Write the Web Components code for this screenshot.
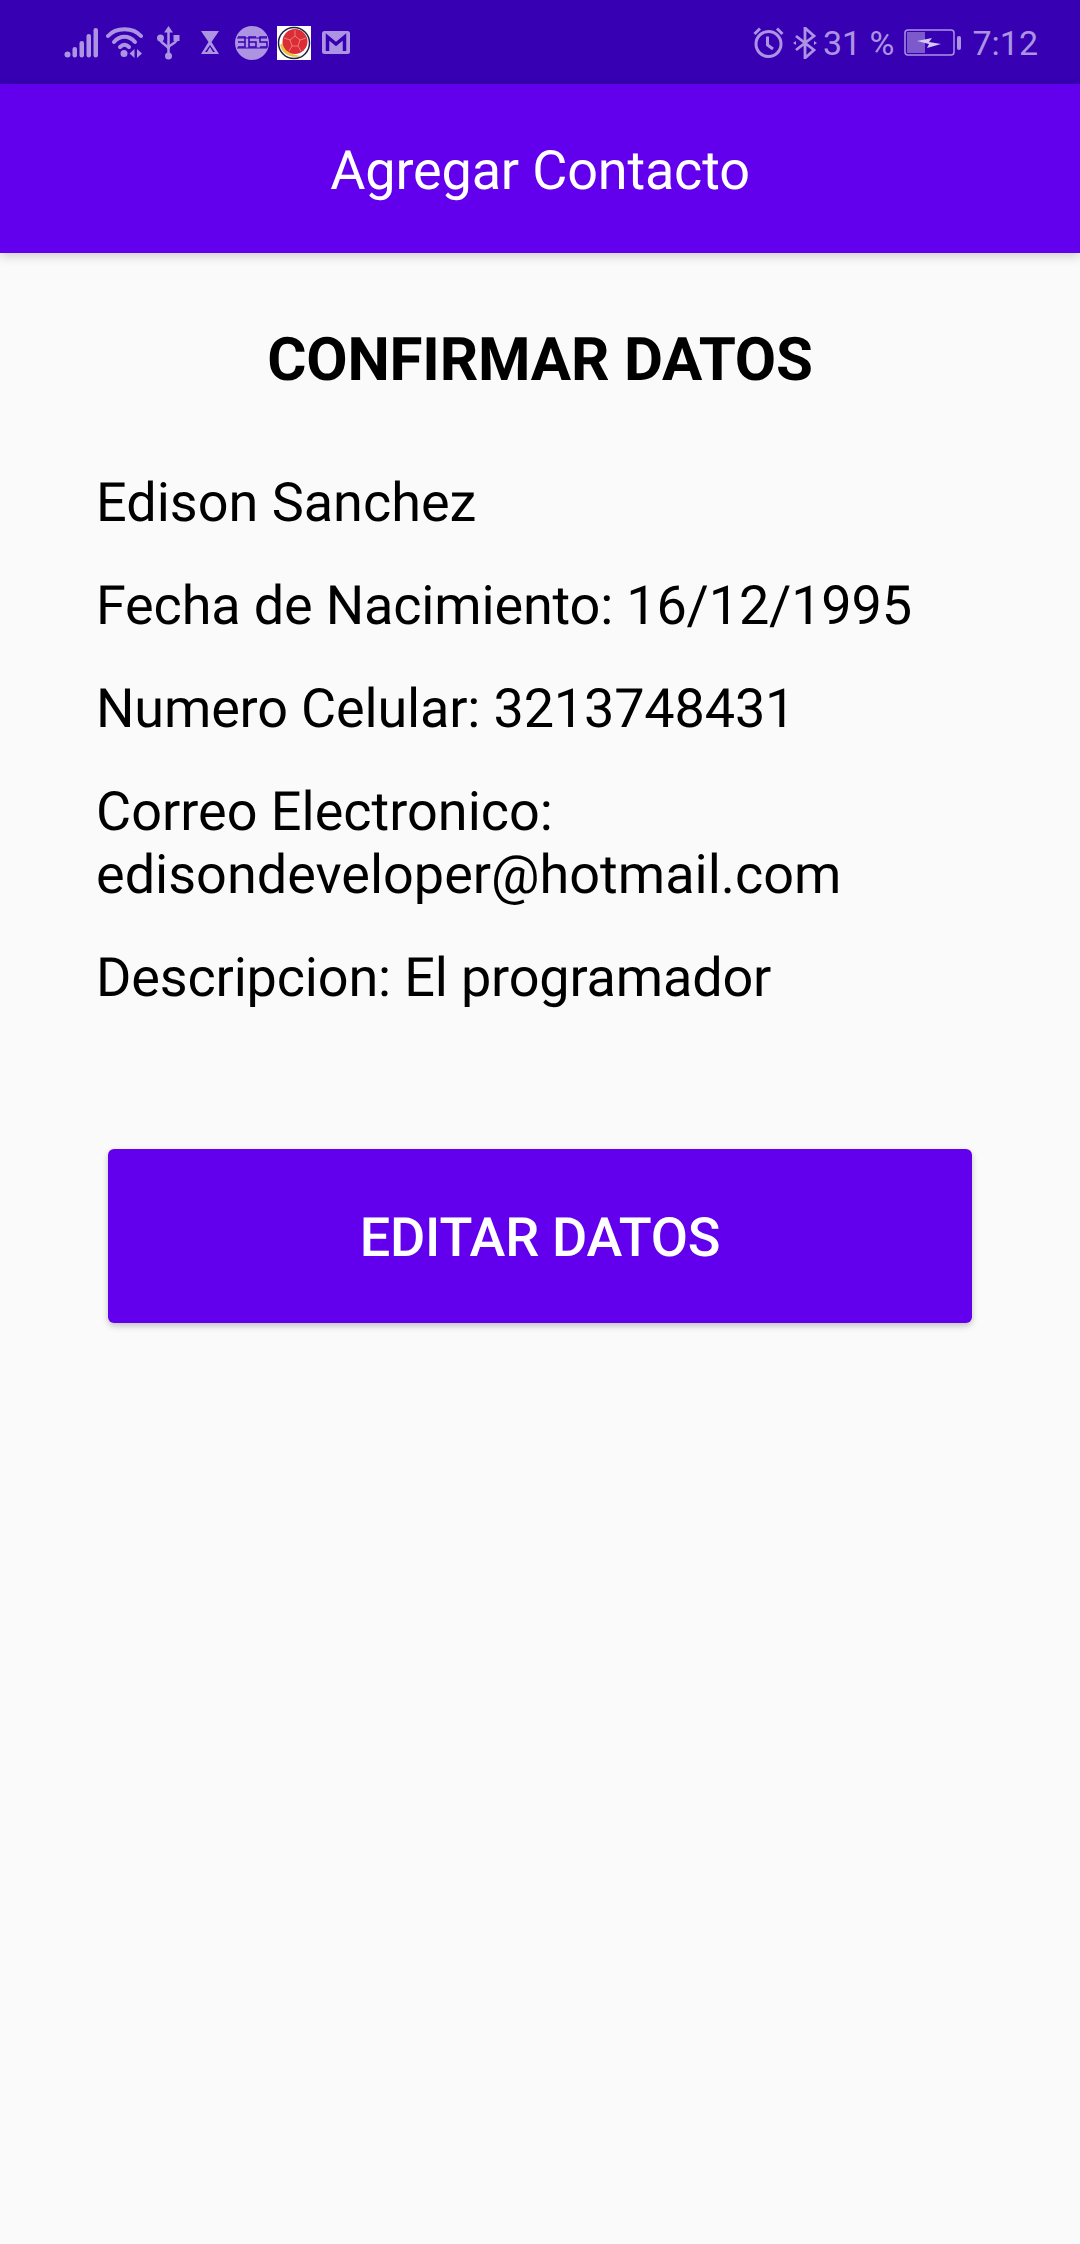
<!DOCTYPE html>
<html><head><meta charset="utf-8"><style>
html,body{margin:0;padding:0;background:#fafafa;font-family:Roboto,sans-serif}
</style></head><body>
<contact-screen></contact-screen>
<script>
class StatusBar extends HTMLElement{constructor(){super();this.attachShadow({mode:'open'}).innerHTML=`<style>
:host{display:flex;height:84px;background:#3700b3;align-items:center;justify-content:space-between;padding:1px 42px 0 64px;color:#ac94e3;font:34px/40px Roboto,sans-serif;box-sizing:border-box}
.l,.r{display:flex;align-items:center}
svg{display:block;flex:none}
</style>
<div class="l">
<svg width="34" height="32" viewBox="0 0 34 32" fill="#ac94e3"><circle cx="3.500" cy="27.500" r="3"/><rect x="8.500" y="20" width="4.500" height="10.500" rx="2.200"/><rect x="15.500" y="14" width="4.500" height="16.500" rx="2.200"/><rect x="22.500" y="7" width="4.500" height="23.500" rx="2.200"/><rect x="29.500" y="1" width="4.500" height="29.500" rx="2.200"/></svg>
<svg style="margin-left:8px" width="37" height="32" viewBox="0 0 37 32" fill="none" stroke="#ac94e3" stroke-width="4" stroke-linecap="round"><path d="M2 9C10 0 27 0 35 9"/><path d="M8 15C14 8 23 8 29 15"/><path d="M14 20C17 17 20 17 23 20"/><circle cx="18" cy="26.500" r="3.500" fill="#ac94e3" stroke="none"/><path d="M28.500 22v9l-5-4.500zM31 22v9l5-4.500z" fill="#ac94e3" stroke="none"/></svg>
<svg style="margin-left:14px" width="23" height="34" viewBox="0 0 23 34" fill="none" stroke="#ac94e3" stroke-width="2.500"><path d="M11.500 4V30"/><path d="M3.500 12v2c0 3 8 6 8 9M19.500 12v2c0 3-8 5-8 8"/><path d="M11.500 0l4.500 6.500H7z" fill="#ac94e3" stroke="none"/><circle cx="3.500" cy="12" r="3.500" fill="#ac94e3" stroke="none"/><rect x="16.500" y="9" width="6" height="6" fill="#ac94e3" stroke="none"/><circle cx="11.500" cy="30" r="3.500" fill="#ac94e3" stroke="none"/></svg>
<svg style="margin-left:21px" width="18" height="23" viewBox="0 0 18 23" fill="#ac94e3"><path d="M0 0H18L10.500 11L18 23H0L7.500 11Z"/><path d="M9 14L4 21H14Z" fill="#3700b3"/><path d="M9 16L6 21H12Z" fill="#ac94e3"/></svg>
<svg style="margin-left:16px" width="34" height="34" viewBox="0 0 34 34"><circle cx="17" cy="17" r="17" fill="#ac94e3"/><g stroke="#3700b3" stroke-width="1.500" fill="none"><path d="M2 12H32M2 22H32" stroke-width="1"/><path d="M3 11H10V21H3M3 16H10M21 11H14V21H21V16H14M32 11H25V16H32V21H25"/></g></svg>
<svg style="margin-left:8px" width="34" height="34" viewBox="0 0 34 34"><rect width="34" height="34" fill="#fff"/><circle cx="17" cy="17" r="15.500" fill="#fff" stroke="#1c2340" stroke-width="1.500"/><path d="M3 19C5 28 14 33 25 30C14 29 8 25 6 17Z" fill="#e8c43c"/><circle cx="18" cy="15.500" r="12.500" fill="#dc2c36"/><path d="M18 10l5 4-2 6h-6l-2-6zM18 10V4M23 14l6-2M21 20l3 5M15 20l-3 5M13 14l-6-2" stroke="#eb8f93" stroke-width=".8" fill="none"/></svg>
<svg style="margin-left:11px" width="28" height="23" viewBox="0 0 28 23"><rect width="28" height="23" rx="2.500" fill="#ac94e3"/><path d="M5.500 20V6L14 13L22.500 6V20" fill="none" stroke="#3700b3" stroke-width="3.500"/></svg>
</div>
<div class="r">
<svg width="31" height="31" viewBox="0 0 31 31" fill="none" stroke="#ac94e3" stroke-width="3"><circle cx="15.500" cy="17" r="12.500"/><path d="M14.500 9.500V18L20 22M1.500 7L7 1.500M29.500 7L24 1.500"/></svg>
<svg style="margin-left:9px" width="24" height="32" viewBox="0 0 24 32" fill="none" stroke="#ac94e3" stroke-width="2.800"><path d="M3 9L21 23L12 31V1L21 9L3 23"/><path d="M0 16l3-2v4zM24 16l-3-2v4z" fill="#ac94e3" stroke="none"/></svg>
<span style="margin-left:6px">31 %</span>
<svg style="margin-left:10px" width="58" height="28" viewBox="0 0 58 28"><rect x="1" y="1" width="49" height="25" rx="3" fill="none" stroke="#ac94e3" stroke-width="1.500"/><rect x="3" y="3" width="18" height="21" fill="#7c5acb"/><rect x="53" y="7" width="4" height="14" rx="2" fill="#ac94e3"/><path d="M13 12L28 9L25 13L37 15L23 19L25 15Z" fill="#d5c8f2"/></svg>
<span style="margin-left:10px">7:12</span>
</div>`}}
customElements.define('status-bar',StatusBar);
class AppBar extends HTMLElement{constructor(){super();this.attachShadow({mode:'open'}).innerHTML=`<style>
:host{display:flex;height:169px;box-sizing:border-box;padding-top:5px;background:#6200ee;color:#fff;align-items:center;justify-content:center;font:54px/63px Roboto,sans-serif;letter-spacing:-.18px;text-rendering:geometricPrecision;box-shadow:0 3px 10px rgba(0,0,0,.18);position:relative}
</style><slot></slot>`}}
customElements.define('app-bar',AppBar);
class DataLine extends HTMLElement{constructor(){super();this.attachShadow({mode:'open'}).innerHTML=`<style>
:host{display:block;font:54px/63px Roboto,sans-serif;color:#000;margin-top:40px;text-rendering:geometricPrecision}
</style><slot></slot>`}}
customElements.define('data-line',DataLine);
class ActionButton extends HTMLElement{constructor(){super();this.attachShadow({mode:'open'}).innerHTML=`<style>
:host{display:flex;height:174px;box-sizing:border-box;padding-top:5px;margin:0 108px;background:#6200ee;color:#fff;border-radius:6px;align-items:center;justify-content:center;font:500 54px/63px Roboto,sans-serif;letter-spacing:-.24px;text-rendering:geometricPrecision;box-shadow:0 3px 6px rgba(0,0,0,.22)}
</style><slot></slot>`}}
customElements.define('action-button',ActionButton);
class ContactScreen extends HTMLElement{constructor(){super();this.attachShadow({mode:'open'}).innerHTML=`<style>
:host{display:block;height:2244px;background:#fafafa;overflow:hidden}
h1{margin:0;padding-top:72px;text-align:center;font:700 60px/70px Roboto,sans-serif;letter-spacing:-.19px;text-rendering:geometricPrecision;color:#000}
.list{padding:0 96px;margin-top:77px}
data-line:first-child{margin-top:0}
data-line.tight{letter-spacing:-.17px}
action-button{margin-top:139px}
</style>
<status-bar></status-bar>
<app-bar>Agregar Contacto</app-bar>
<h1>CONFIRMAR DATOS</h1>
<div class="list">
<data-line>Edison Sanchez</data-line>
<data-line class="tight">Fecha de Nacimiento: 16/12/1995</data-line>
<data-line class="tight">Numero Celular: 3213748431</data-line>
<data-line>Correo Electronico:<br>edisondeveloper@hotmail.com</data-line>
<data-line class="tight">Descripcion: El programador</data-line>
</div>
<action-button>EDITAR DATOS</action-button>`}}
customElements.define('contact-screen',ContactScreen);
</script></body></html>
